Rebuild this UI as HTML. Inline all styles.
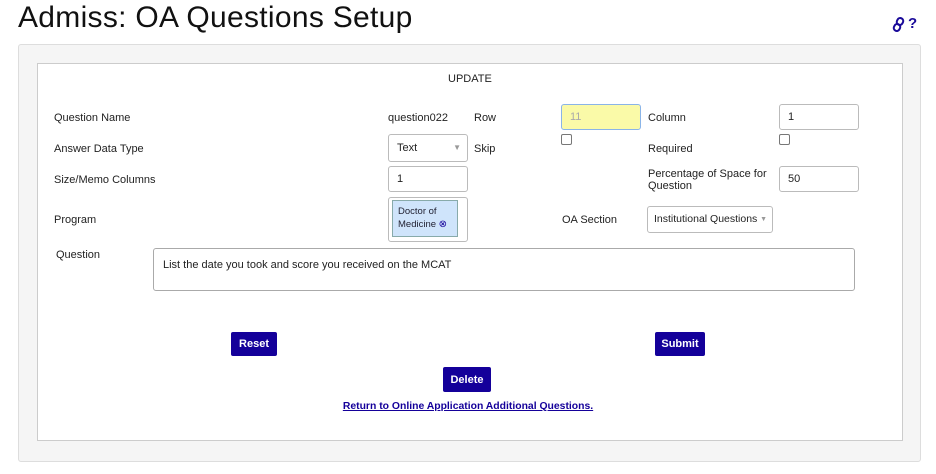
<!DOCTYPE html>
<html><head><style>
body{margin:0;width:936px;height:474px;background:#fff;font-family:"Liberation Sans",Arial,sans-serif;position:relative;overflow:hidden}
.a{position:absolute}
.l{font-size:11px;color:#222;position:absolute}
.in{position:absolute;border:1px solid #bbb;border-radius:3px;background:#fff;font-size:11px;color:#222;box-sizing:border-box;padding-left:8px}
.btn{position:absolute;background:#14009a;color:#fff;font-size:11px;font-weight:bold;text-align:center;border-radius:2px}
</style></head><body>
<div class="a" style="left:18px;top:1px;font-size:30px;color:#111;font-family:'Liberation Sans',sans-serif;letter-spacing:0.3px">Admiss: OA Questions Setup</div>
<svg class="a" style="left:892px;top:17px" width="13" height="15" viewBox="0 0 13 15"><g fill="none" stroke="#1a0a9a" stroke-width="2"><rect x="5" y="1" width="6" height="7" rx="3" transform="rotate(25 8 4.5)"/><rect x="2" y="7" width="6" height="7" rx="3" transform="rotate(25 5 10.5)"/></g></svg>
<div class="a" style="left:908px;top:15px;color:#1a0a9a;font-size:15px;font-weight:bold">?</div>
<div class="a" style="left:18px;top:44px;width:901px;height:416px;background:#f5f5f5;border:1px solid #ddd;border-radius:3px"></div>
<div class="a" style="left:37px;top:63px;width:864px;height:376px;background:#fff;border:1px solid #ccc"></div>
<div class="l" style="left:448px;top:73px">UPDATE</div>
<div class="l" style="left:54px;top:112px">Question Name</div>
<div class="l" style="left:388px;top:112px">question022</div>
<div class="l" style="left:474px;top:112px">Row</div>
<div class="in" style="left:561px;top:104px;width:80px;height:26px;background:#fafaa8;border-color:#8ab4e8;color:#aaa;line-height:24px">11</div>
<div class="l" style="left:648px;top:112px">Column</div>
<div class="in" style="left:779px;top:104px;width:80px;height:26px;line-height:24px">1</div>
<div class="l" style="left:54px;top:143px">Answer Data Type</div>
<div class="in" style="left:388px;top:134px;width:80px;height:28px;line-height:26px">Text<span style="position:absolute;right:6px;color:#999;font-size:8px">&#9660;</span></div>
<div class="l" style="left:474px;top:143px">Skip</div>
<div class="a" style="left:561px;top:134px;width:9px;height:9px;border:1px solid #777;border-radius:2px"></div>
<div class="l" style="left:648px;top:143px">Required</div>
<div class="a" style="left:779px;top:134px;width:9px;height:9px;border:1px solid #777;border-radius:2px"></div>
<div class="l" style="left:54px;top:174px">Size/Memo Columns</div>
<div class="in" style="left:388px;top:166px;width:80px;height:26px;line-height:24px">1</div>
<div class="l" style="left:648px;top:168px;line-height:12px">Percentage of Space for<br>Question</div>
<div class="in" style="left:779px;top:166px;width:80px;height:26px;line-height:24px">50</div>
<div class="l" style="left:54px;top:214px">Program</div>
<div class="in" style="left:388px;top:197px;width:80px;height:45px;padding:0"></div>
<div class="a" style="left:392px;top:200px;width:66px;height:37px;background:#cfe4fb;border:1px solid #8aa;font-size:9.5px;color:#223;padding:4px 0 0 5px;box-sizing:border-box;line-height:13px">Doctor of<br>Medicine <span style="color:#14009a;font-size:10px">&#8855;</span></div>
<div class="l" style="left:562px;top:214px">OA Section</div>
<div class="in" style="left:647px;top:206px;width:126px;height:27px;line-height:25px;font-size:10.5px;padding-left:6px">Institutional Questions<span style="position:absolute;right:5px;color:#999;font-size:7px">&#9660;</span></div>
<div class="l" style="left:56px;top:249px">Question</div>
<div class="in" style="left:153px;top:248px;width:702px;height:43px;padding-top:10px;padding-left:9px;border-color:#aaa">List the date you took and score you received on the MCAT</div>
<div class="btn" style="left:231px;top:332px;width:46px;height:24px;line-height:25px">Reset</div>
<div class="btn" style="left:655px;top:332px;width:50px;height:24px;line-height:25px">Submit</div>
<div class="btn" style="left:443px;top:367px;width:48px;height:25px;line-height:26px">Delete</div>
<div class="a" style="left:0;width:936px;text-align:center;top:401px;font-size:10.4px;font-weight:bold;color:#14009a;text-decoration:underline">Return to Online Application Additional Questions.</div>
</body></html>
